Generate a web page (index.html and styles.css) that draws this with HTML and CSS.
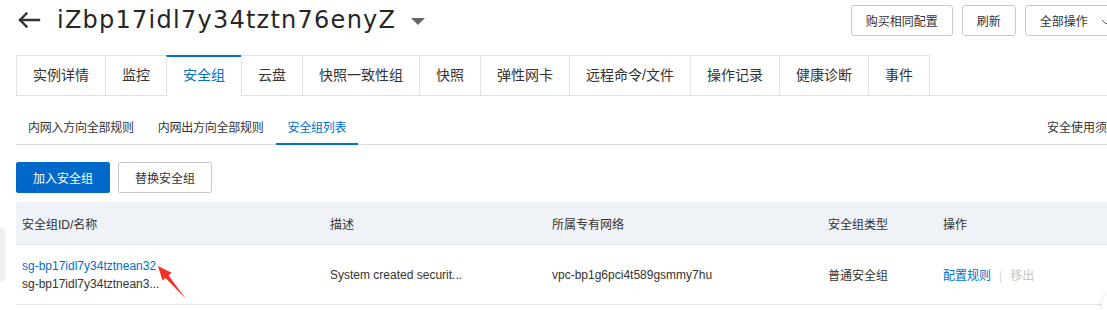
FILE: index.html
```html
<!DOCTYPE html>
<html lang="zh-CN">
<head>
<meta charset="utf-8">
<title>实例详情</title>
<link rel="stylesheet" href="styles.css">
</head>
<body>
<div class="page">
  <header class="header">
    <svg class="back" width="24" height="16" viewBox="0 0 24 16"><path d="M22 8H3M9.5 1.5L3 8l6.5 6.5" fill="none" stroke="#333" stroke-width="2.4" stroke-linecap="square"/></svg>
    <h1 class="title">iZbp17idl7y34tztn76enyZ</h1>
    <span class="caret"></span>
    <div class="actions">
      <button class="btn">购买相同配置</button>
      <button class="btn">刷新</button>
      <button class="btn btn-more">全部操作 <svg width="10" height="6" viewBox="0 0 10 6"><path d="M1 1l4 4 4-4" fill="none" stroke="#666" stroke-width="1"/></svg></button>
    </div>
  </header>

  <nav class="tabs">
    <div class="tab">实例详情</div>
    <div class="tab">监控</div>
    <div class="tab active">安全组</div>
    <div class="tab">云盘</div>
    <div class="tab">快照一致性组</div>
    <div class="tab">快照</div>
    <div class="tab">弹性网卡</div>
    <div class="tab">远程命令/文件</div>
    <div class="tab">操作记录</div>
    <div class="tab">健康诊断</div>
    <div class="tab">事件</div>
  </nav>

  <nav class="subtabs">
    <div class="subtab">内网入方向全部规则</div>
    <div class="subtab">内网出方向全部规则</div>
    <div class="subtab active">安全组列表</div>
    <div class="subtab-right">安全使用须知</div>
  </nav>

  <div class="toolbar">
    <button class="btn2 primary">加入安全组</button>
    <button class="btn2">替换安全组</button>
  </div>

  <div class="table">
    <div class="thead">
      <div class="cell">安全组ID/名称</div>
      <div class="cell">描述</div>
      <div class="cell">所属专有网络</div>
      <div class="cell">安全组类型</div>
      <div class="cell">操作</div>
    </div>
    <div class="trow">
      <div class="cell stack">
        <a class="link">sg-bp17idl7y34tztnean32</a>
        <span>sg-bp17idl7y34tztnean3...</span>
      </div>
      <div class="cell">System created securit...</div>
      <div class="cell">vpc-bp1g6pci4t589gsmmy7hu</div>
      <div class="cell">普通安全组</div>
      <div class="cell ops"><a class="link">配置规则</a><span class="sep">|</span><span class="disabled">移出</span></div>
    </div>
  </div>

  <svg class="red-arrow" width="40" height="45" viewBox="0 0 40 45"><polygon points="8,8 12.5,22.6 15.5,20 36,41 18.6,17.4 21.6,14.8" fill="#f2302b"/></svg>
  <div class="side-handle"></div>
  <div class="float-corner"></div>
</div>
</body>
</html>
```

FILE: styles.css
```css
html, body {
  margin: 0;
  padding: 0;
  background: #fff;
  overflow: hidden;
}
body {
  font-family: "Liberation Sans", "Noto Sans CJK SC", sans-serif;
  color: #333;
  font-size: 12px;
}
.page {
  position: relative;
  width: 1107px;
  height: 310px;
  overflow: hidden;
}
.header {
  display: flex;
  align-items: center;
  height: 40px;
  padding-left: 17px;
}
.back {
  display: block;
  flex-shrink: 0;
}
.title {
  margin: 0 0 0 16px;
  font-family: "DejaVu Sans", "Liberation Sans", sans-serif;
  font-weight: normal;
  font-size: 24px;
  letter-spacing: 1.25px;
  color: #262626;
  line-height: 40px;
  white-space: nowrap;
}
.caret {
  width: 0;
  height: 0;
  margin-left: 15px;
  margin-top: 2px;
  border-left: 7px solid transparent;
  border-right: 7px solid transparent;
  border-top: 7px solid #666;
}
.actions {
  display: flex;
  gap: 9px;
  margin-left: auto;
  margin-right: -19px;
  flex-shrink: 0;
}
.btn {
  height: 31px;
  padding: 0 14px;
  border: 1px solid #c9c9c9;
  border-radius: 3px;
  background: #fff;
  color: #333;
  font-family: inherit;
  font-size: 12px;
  white-space: nowrap;
}
.btn-more svg {
  margin-left: 10px;
  vertical-align: middle;
}
.tabs {
  display: flex;
  margin: 15px 0 0 16px;
  height: 40px;
  border-bottom: 1px solid #e0e0e0;
}
.tab {
  padding: 0 16px;
  height: 40px;
  line-height: 38px;
  font-size: 14px;
  border: 1px solid #e3e3e3;
  border-right: none;
  border-bottom: none;
  color: #333;
  white-space: nowrap;
  box-sizing: border-box;
}
.tab:last-child {
  border-right: 1px solid #e3e3e3;
}
.tab.active {
  border-top: 2px solid #0070cc;
  color: #0070cc;
  background: #fff;
  height: 41px;
  margin-bottom: -1px;
  line-height: 37px;
}
.subtabs {
  display: flex;
  margin-left: 16px;
  height: 48px;
  border-bottom: 1px solid #dcdcdc;
}
.subtab {
  padding: 24px 12px 7px;
  line-height: 16px;
  height: 49px;
  box-sizing: border-box;
  border-bottom: 2px solid transparent;
  margin-bottom: -1px;
  white-space: nowrap;
  letter-spacing: -0.25px;
  color: #333;
}
.subtab.active {
  border-bottom-color: #0070cc;
  color: #0070cc;
}
.subtab-right {
  margin-left: auto;
  margin-right: -12px;
  padding-top: 24px;
  line-height: 16px;
  white-space: nowrap;
  flex-shrink: 0;
}
.toolbar {
  display: flex;
  gap: 8px;
  margin: 17px 0 0 16px;
}
.btn2 {
  height: 31px;
  padding: 0 16px;
  border: 1px solid #c9c9c9;
  border-radius: 2px;
  background: #fff;
  color: #333;
  font-family: inherit;
  font-size: 12px;
}
.btn2.primary {
  background: #0068c8;
  border-color: #0068c8;
  color: #fff;
}
.table {
  margin: 9px 0 0 16px;
}
.thead, .trow {
  display: grid;
  grid-template-columns: 308px 222px 276px 115px 1fr;
}
.thead {
  height: 42px;
  background: #eff2f7;
  border-bottom: 1px solid #e2e7ee;
  align-items: center;
}
.trow {
  height: 59px;
  border-bottom: 1px solid #e5e5e5;
  align-items: center;
}
.cell {
  padding-left: 6px;
  white-space: nowrap;
  overflow: hidden;
}
.stack {
  display: flex;
  flex-direction: column;
  line-height: 18px;
}
.link {
  color: #0070cc;
  text-decoration: none;
}
.ops .sep {
  color: #d9d9d9;
  margin: 0 8px;
}
.ops .disabled {
  color: #c5c5c5;
}
.red-arrow {
  position: absolute;
  left: 150px;
  top: 258px;
}
.side-handle {
  position: absolute;
  left: 0;
  top: 228px;
  width: 5px;
  height: 54px;
  background: #efefef;
  border-radius: 0 4px 4px 0;
}
.float-corner {
  position: absolute;
  left: 1102px;
  top: 293px;
  width: 40px;
  height: 40px;
  border-radius: 10px;
  background: #fff;
  box-shadow: 0 0 6px rgba(0, 0, 0, 0.12);
}
```
